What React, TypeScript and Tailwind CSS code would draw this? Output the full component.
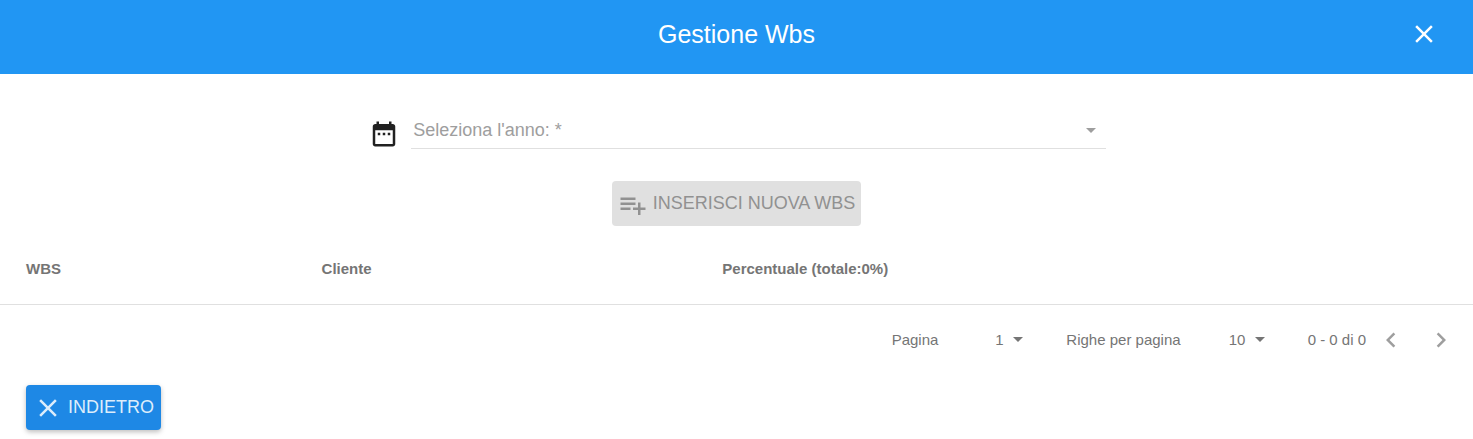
import React from 'react';

const icons = {
  close:
    'M19 6.41L17.59 5 12 10.59 6.41 5 5 6.41 10.59 12 5 17.59 6.41 19 12 13.41 17.59 19 19 17.59 13.41 12z',
  dateRange:
    'M9 11H7v2h2v-2zm4 0h-2v2h2v-2zm4 0h-2v2h2v-2zm2-7h-1V2h-2v2H8V2H6v2H5c-1.11 0-1.99.9-1.99 2L3 20c0 1.1.89 2 2 2h14c1.1 0 2-.9 2-2V6c0-1.1-.9-2-2-2zm0 16H5V9h14v11z',
  playlistAdd:
    'M14 10H2v2h12v-2zm0-4H2v2h12V6zm4 8v-4h-2v4h-4v2h4v4h2v-4h4v-2h-4zM2 16h8v-2H2v2z',
  before: 'M15.41 7.41L14 6l-6 6 6 6 1.41-1.41L10.83 12z',
  next: 'M10 6L8.59 7.41 13.17 12l-4.58 4.59L10 18l6-6z',
};

function Icon({ name, className = '' }: { name: keyof typeof icons; className?: string }) {
  return (
    <svg viewBox="0 0 24 24" fill="currentColor" aria-hidden="true" className={`size-[30px] shrink-0 ${className}`}>
      <path d={icons[name]} />
    </svg>
  );
}

function Caret({ className }: { className: string }) {
  return (
    <svg
      viewBox="0 0 10 5"
      fill="currentColor"
      aria-hidden="true"
      className={`pointer-events-none absolute h-[5px] w-[10px] ${className}`}
    >
      <path d="M0 0h10L5 5z" />
    </svg>
  );
}

function PageSelect({ id, options, className }: { id: string; options: string[]; className: string }) {
  return (
    <div className={`relative ${className}`}>
      <select id={id} className="block h-6 w-full appearance-none bg-transparent outline-none">
        {options.map((o) => (
          <option key={o}>{o}</option>
        ))}
      </select>
      <Caret className="top-[9px] right-0" />
    </div>
  );
}

export default function App() {
  return (
    <div className="bg-white font-['Liberation_Sans',Arial,sans-serif] text-[15px] text-[#757575]">
      <header className="flex h-[74px] items-start bg-[#2196f3] px-[34px] pt-[19px] text-white">
        <div className="w-[30px]" />
        <h1 className="flex-1 text-center text-[25px] leading-[30px]">Gestione Wbs</h1>
        <button type="button" aria-label="Chiudi" className="size-[30px]">
          <Icon name="close" />
        </button>
      </header>

      <main>
        <div className="mx-auto mt-[38px] flex w-[calc(50%+2px)] items-end gap-3 pl-[2px]">
          <Icon name="dateRange" className="text-[#212121]" />
          <div className="relative flex-1 border-b border-[#e0e0e0]">
            <select
              aria-label="Seleziona l'anno"
              required
              defaultValue=""
              className="block h-9 w-full appearance-none bg-transparent pr-8 pl-[2px] text-[18px] text-[#9e9e9e] outline-none"
            >
              <option value="">Seleziona l'anno: *</option>
            </select>
            <Caret className="top-4 right-[10px] text-[#9e9e9e]" />
          </div>
        </div>

        <div className="mt-8 flex justify-center">
          <button
            type="button"
            disabled
            className="flex h-[45px] items-center gap-[5px] rounded bg-[#e0e0e0] px-[6px] text-[18px] text-[#919191]"
          >
            <Icon name="playlistAdd" className="mt-[3px]" />
            INSERISCI NUOVA WBS
          </button>
        </div>

        <table className="mt-[9px] w-full table-fixed text-left">
          <thead>
            <tr className="h-[69px] border-b border-[#e0e0e0]">
              <th className="w-[20%] pl-[26px] font-bold">WBS</th>
              <th className="w-[27%] pl-[27px] font-bold">Cliente</th>
              <th className="pl-[30px] font-bold">Percentuale (totale:0%)</th>
            </tr>
          </thead>
          <tbody />
        </table>

        <div className="flex h-[70px] items-center justify-end pr-[17px] leading-6">
          <label htmlFor="pagina">Pagina</label>
          <PageSelect id="pagina" options={['1']} className="ml-[57px] w-[28px]" />
          <label htmlFor="righe" className="ml-[43px]">
            Righe per pagina
          </label>
          <PageSelect id="righe" options={['10']} className="ml-[48px] w-[36px]" />
          <span className="ml-[43px]">0 - 0 di 0</span>
          <div className="ml-[10px] flex gap-5 text-[#9e9e9e]">
            <button type="button" disabled aria-label="Precedente">
              <Icon name="before" />
            </button>
            <button type="button" disabled aria-label="Successiva">
              <Icon name="next" />
            </button>
          </div>
        </div>

        <div className="flex px-[26px] pt-[10px] pb-2">
          <button
            type="button"
            className="flex h-[45px] items-center gap-[5px] rounded bg-[#1e88e5] px-[7px] text-[18px] text-[#ddedfb] shadow-[0_2px_5px_rgba(0,0,0,0.26)]"
          >
            <Icon name="close" className="mt-[2px]" />
            INDIETRO
          </button>
        </div>
      </main>
    </div>
  );
}
